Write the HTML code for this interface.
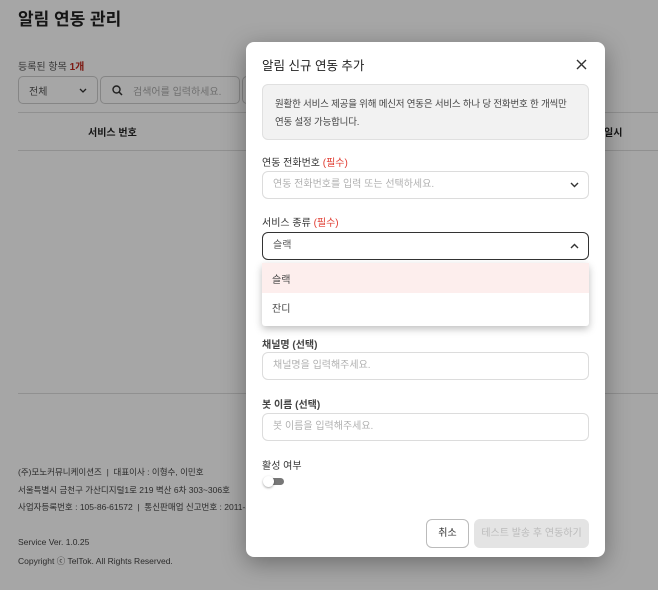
<!DOCTYPE html>
<html><head><meta charset="utf-8"><style>
*{box-sizing:border-box;margin:0;padding:0}
body{width:658px;height:590px;overflow:hidden;background:#fff;font-family:"Liberation Sans","Noto Sans CJK KR",sans-serif;position:relative;color:#222}
.a{position:absolute}
.ov{position:absolute;left:0;top:0;width:658px;height:590px;background:rgba(0,0,0,0.35)}
.modal{position:absolute;left:246px;top:42px;width:359px;height:515px;background:#fff;border-radius:8px;box-shadow:0 6px 24px rgba(0,0,0,.35)}
.inp{position:absolute;left:16px;width:327px;height:28px;border:1px solid #dcdcdc;border-radius:6px;font-size:10px;color:#b0b0b0;padding:0 10px;line-height:26px}
.lbl{position:absolute;left:16px;font-size:10px;color:#333}
.req{color:#e03a2f}
</style></head><body>
<div class="a" style="left:18px;top:5px;font-size:17px;font-weight:bold;color:#222">알림 연동 관리</div>
<div class="a" style="left:18px;top:58px;font-size:10px;color:#555">등록된 항목 <b style="color:#c0281e">1개</b></div>
<div class="a" style="left:18px;top:76px;width:80px;height:28px;border:1px solid #ccc;border-radius:5px;font-size:10px;color:#555;padding:6px 10px;background:#fff">전체<svg style="position:absolute;right:10px;top:11px" width="8" height="5" viewBox="0 0 8 5"><path d="M1 1L4 4L7 1" stroke="#333" stroke-width="1.3" fill="none"/></svg></div>
<div class="a" style="left:100px;top:76px;width:140px;height:28px;border:1px solid #ccc;border-radius:5px;font-size:10px;color:#aaa;padding:6px 10px 6px 32px;background:#fff"><svg style="position:absolute;left:11px;top:8px" width="11" height="11" viewBox="0 0 11 11"><circle cx="4.5" cy="4.5" r="3.5" stroke="#333" stroke-width="1.4" fill="none"/><path d="M7 7L10 10" stroke="#333" stroke-width="1.5"/></svg>검색어를 입력하세요.</div>
<div class="a" style="left:242px;top:76px;width:10px;height:28px;border:1px solid #ccc;border-radius:5px;background:#fff"></div>
<div class="a" style="left:18px;top:112px;width:640px;height:1px;background:#ddd"></div>
<div class="a" style="left:88px;top:124px;font-size:10px;font-weight:bold;color:#222">서비스 번호</div>
<div class="a" style="left:604px;top:124px;font-size:10px;font-weight:bold;color:#222">일시</div>
<div class="a" style="left:18px;top:150px;width:640px;height:1px;background:#ddd"></div>
<div class="a" style="left:18px;top:393px;width:640px;height:1px;background:#ddd"></div>
<div class="a" style="left:18px;top:464px;font-size:8.5px;color:#444;line-height:17.5px">(주)모노커뮤니케이션즈 &nbsp;| &nbsp;대표이사 : 이형수, 이민호<br>서울특별시 금천구 가산디지털1로 219 벽산 6차 303~306호<br>사업자등록번호 : 105-86-61572 &nbsp;| &nbsp;통신판매업 신고번호 : 2011-서울</div>
<div class="a" style="left:18px;top:533px;font-size:8.5px;color:#444;line-height:19px">Service Ver. 1.0.25<br>Copyright ⓒ TelTok. All Rights Reserved.</div>
<div class="ov"></div>
<div class="modal">
<div class="a" style="left:16px;top:13px;font-size:12.5px;color:#222">알림 신규 연동 추가</div>
<svg class="a" style="left:330px;top:17px" width="11" height="11" viewBox="0 0 11 11"><path d="M1 1L10 10M10 1L1 10" stroke="#333" stroke-width="1.4"/></svg>
<div class="a" style="left:16px;top:42px;width:327px;height:56px;background:#f2f2f2;border:1px solid #e0e0e0;border-radius:6px;font-size:9.5px;letter-spacing:-0.2px;color:#444;padding:11px 12px;line-height:18px">원활한 서비스 제공을 위해 메신저 연동은 서비스 하나 당 전화번호 한 개씩만<br>연동 설정 가능합니다.</div>
<div class="lbl" style="top:112px">연동 전화번호 <span class="req">(필수)</span></div>
<div class="inp" style="top:129px">연동 전화번호를 입력 또는 선택하세요.<svg style="position:absolute;right:9px;top:10px" width="9" height="6" viewBox="0 0 9 6"><path d="M1 1L4.5 4.5L8 1" stroke="#333" stroke-width="1.4" fill="none"/></svg></div>
<div class="lbl" style="top:172px">서비스 종류 <span class="req">(필수)</span></div>
<div class="inp" style="top:190px;border-color:#333;color:#555">슬랙<svg style="position:absolute;right:9px;top:10px" width="9" height="6" viewBox="0 0 9 6"><path d="M1 5L4.5 1.5L8 5" stroke="#333" stroke-width="1.4" fill="none"/></svg></div>
<div class="a" style="left:16px;top:221px;width:327px;height:63px;background:#fff;border-radius:3px;box-shadow:0 3px 8px rgba(0,0,0,.25);font-size:10px;color:#444">
<div style="height:30px;background:#fdeeed;padding:8px 10px">슬랙</div>
<div style="height:30px;padding:7px 10px">잔디</div></div>
<div class="lbl" style="top:294px;font-weight:bold;color:#444">채널명 (선택)</div>
<div class="inp" style="top:310px">채널명을 입력해주세요.</div>
<div class="lbl" style="top:354px;font-weight:bold;color:#444">봇 이름 (선택)</div>
<div class="inp" style="top:371px">봇 이름을 입력해주세요.</div>
<div class="lbl" style="top:415px">활성 여부</div>
<div class="a" style="left:21px;top:436px;width:17px;height:7px;border-radius:4px;background:#777"></div>
<div class="a" style="left:17px;top:434px;width:11px;height:11px;border-radius:50%;background:#fff;box-shadow:0 1px 2px rgba(0,0,0,.35)"></div>
<div class="a" style="left:180px;top:477px;width:43px;height:29px;border:1px solid #bbb;border-radius:6px;font-size:10px;color:#333;text-align:center;line-height:27px">취소</div>
<div class="a" style="left:228px;top:477px;width:115px;height:29px;background:#e4e4e4;border-radius:6px;font-size:10px;color:#bbb;text-align:center;line-height:29px">테스트 발송 후 연동하기</div>
</div>
</body></html>
